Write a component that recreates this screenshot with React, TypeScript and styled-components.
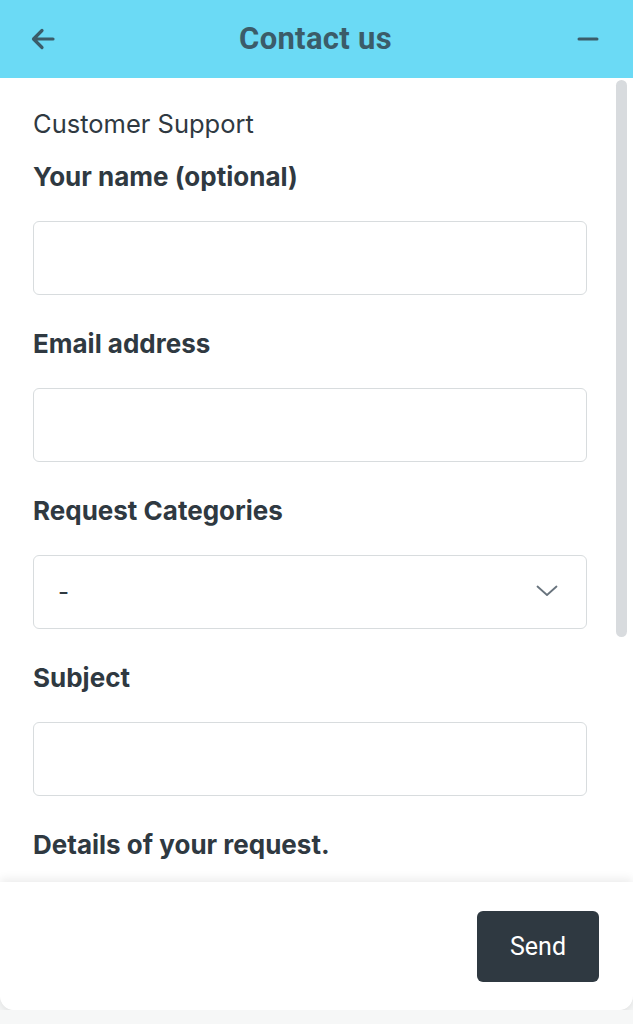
import React from "react";
import styled, { createGlobalStyle } from "styled-components";

const GlobalStyle = createGlobalStyle`
  html, body {
    margin: 0;
    padding: 0;
    background: #f6f7f7;
  }
  body {
    font-family: Inter, "Liberation Sans", Arial, sans-serif;
  }
  * { box-sizing: border-box; }
`;

const Widget = styled.div`
  width: 633px;
  height: 1010px;
  display: flex;
  flex-direction: column;
  background: #ffffff;
  border-radius: 0 0 14px 14px;
  box-shadow: 0 2px 8px rgba(0, 0, 0, 0.1);
  overflow: hidden;
`;

const Header = styled.header`
  height: 78px;
  flex: none;
  background: #6bdaf5;
  display: flex;
  align-items: center;
  justify-content: space-between;
  padding: 0 30px 0 28px;
`;

const IconButton = styled.button`
  width: 30px;
  height: 30px;
  border: none;
  background: transparent;
  padding: 0;
  display: flex;
  align-items: center;
  justify-content: center;
  color: #3b5c69;
  cursor: pointer;
`;

const Title = styled.h1`
  margin: 0;
  font-family: Roboto, Inter, "Liberation Sans", sans-serif;
  font-weight: 700;
  font-size: 31px;
  letter-spacing: 0.3px;
  color: #3b5c69;
  position: relative;
  top: -1px;
`;

const Body = styled.main`
  flex: 1;
  position: relative;
  overflow: hidden;
  background: #ffffff;
`;

const Form = styled.form`
  display: flex;
  flex-direction: column;
  padding: 31px 46px 0 33px;
`;

const Intro = styled.p`
  margin: 0 0 23px;
  font-size: 25.5px;
  line-height: 30px;
  color: #2f3941;
  font-weight: 400;
`;

const Field = styled.div`
  display: flex;
  flex-direction: column;
  margin-bottom: 34px;
`;

const Label = styled.label`
  font-size: 26px;
  line-height: 30px;
  font-weight: 700;
  color: #2f3941;
  margin-bottom: 29px;
`;

const Input = styled.input`
  height: 74px;
  width: 100%;
  border: 1.5px solid #d8dcde;
  border-radius: 6px;
  background: #fff;
  font-family: inherit;
  font-size: 22px;
  padding: 0 24px;
  color: #2f3941;
  outline: none;
`;

const SelectBox = styled.div`
  height: 74px;
  width: 100%;
  border: 1.5px solid #d8dcde;
  border-radius: 6px;
  background: #fff;
  display: flex;
  align-items: center;
  justify-content: space-between;
  padding: 0 28px 2px 24px;
  font-size: 24px;
  color: #2f3941;
`;

const TextArea = styled.textarea`
  height: 150px;
  width: 100%;
  border: 1.5px solid #d8dcde;
  border-radius: 6px;
  resize: none;
`;

const ScrollThumb = styled.div`
  position: absolute;
  top: 2px;
  right: 6px;
  width: 11px;
  height: 557px;
  border-radius: 6px;
  background: #d8dbde;
`;

const Footer = styled.footer`
  height: 128px;
  flex: none;
  position: relative;
  z-index: 1;
  background: #ffffff;
  border-radius: 0 0 14px 14px;
  box-shadow: 0 -3px 10px rgba(0, 0, 0, 0.08);
  display: flex;
  align-items: center;
  justify-content: flex-end;
  padding: 0 34px 0 0;
`;

const SendButton = styled.button`
  width: 122px;
  height: 71px;
  border: none;
  border-radius: 6px;
  background: #2f3941;
  color: #ffffff;
  font-family: Roboto, Inter, "Liberation Sans", sans-serif;
  font-size: 25px;
  font-weight: 400;
  cursor: pointer;
`;

const ArrowIcon = () => (
  <svg width="26" height="24" viewBox="0 0 26 24" fill="none">
    <path
      d="M23 12H4M12 3.5L3.5 12L12 20.5"
      stroke="currentColor"
      strokeWidth="3.2"
      strokeLinecap="round"
      strokeLinejoin="round"
    />
  </svg>
);

const MinusIcon = () => (
  <svg width="22" height="6" viewBox="0 0 22 6" fill="none">
    <path d="M2 3H20" stroke="currentColor" strokeWidth="3" strokeLinecap="round" />
  </svg>
);

const Chevron = () => (
  <svg width="22" height="12" viewBox="0 0 22 12" fill="none">
    <path
      d="M1.5 1.5L11 10L20.5 1.5"
      stroke="#68737d"
      strokeWidth="1.8"
      strokeLinecap="round"
      strokeLinejoin="round"
    />
  </svg>
);

export default function App() {
  return (
    <>
      <GlobalStyle />
      <Widget>
        <Header>
          <IconButton aria-label="Back">
            <ArrowIcon />
          </IconButton>
          <Title>Contact us</Title>
          <IconButton aria-label="Minimize">
            <MinusIcon />
          </IconButton>
        </Header>
        <Body>
          <Form>
            <Intro>Customer Support</Intro>
            <Field>
              <Label>Your name (optional)</Label>
              <Input />
            </Field>
            <Field>
              <Label>Email address</Label>
              <Input />
            </Field>
            <Field>
              <Label>Request Categories</Label>
              <SelectBox>
                <span>-</span>
                <Chevron />
              </SelectBox>
            </Field>
            <Field>
              <Label>Subject</Label>
              <Input />
            </Field>
            <Field>
              <Label>Details of your request.</Label>
              <TextArea />
            </Field>
          </Form>
          <ScrollThumb />
        </Body>
        <Footer>
          <SendButton>Send</SendButton>
        </Footer>
      </Widget>
    </>
  );
}
